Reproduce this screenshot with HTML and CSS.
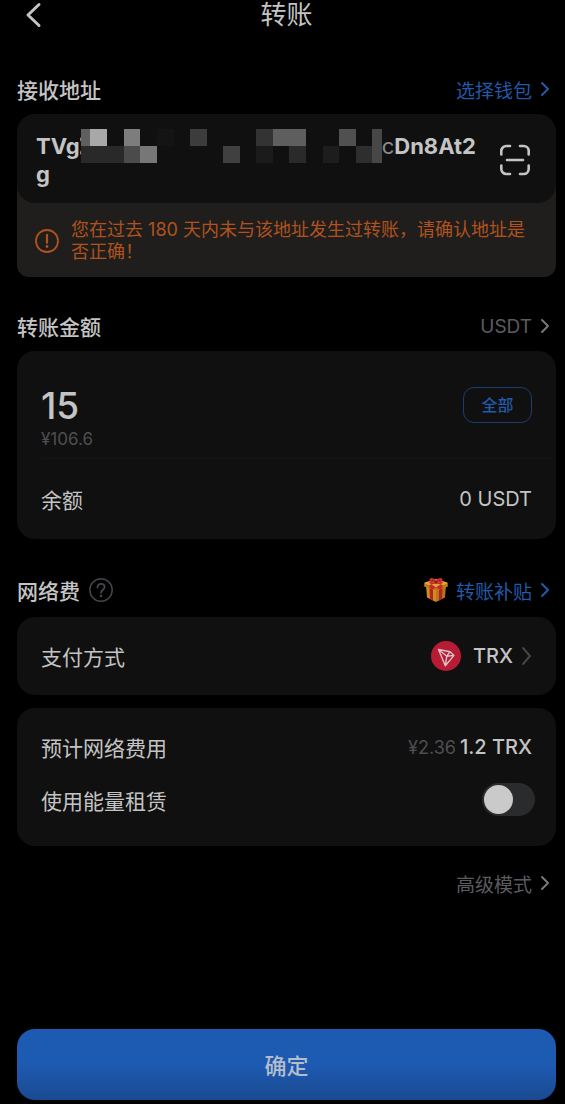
FILE: index.html
```html
<!DOCTYPE html>
<html lang="zh-CN">
<head>
<meta charset="utf-8">
<meta name="viewport" content="width=device-width, initial-scale=1">
<title>转账</title>
<link rel="stylesheet" href="styles.css">
</head>
<body>
<main class="page">
  <header class="topbar">
    <button class="back" type="button" aria-label="返回">
      <svg width="18" height="28" viewBox="0 0 18 28"><path d="M15 3.500L4 14l11 10.500" fill="none" stroke="currentColor" stroke-width="3" stroke-linecap="round" stroke-linejoin="round"/></svg>
    </button>
    <h1 class="title">转账</h1>
  </header>

  <section class="section section-address">
    <div class="head">
      <h2 class="label">接收地址</h2>
      <a class="link link-blue" href="#">选择钱包
        <svg class="chev" width="10" height="16" viewBox="0 0 10 16"><path d="M2 2l6 6-6 6"/></svg>
      </a>
    </div>
    <div class="notice-wrap">
      <div class="card address-card">
        <p class="address"><span>TVg</span><span class="masked"><svg class="mosaic" width="302" height="34" viewBox="0 0 302 34" aria-hidden="true">
          <path d="M0 9l2 3.500M0 25l2-3.500" stroke="#8c8c8c" stroke-width="2"/>
          <g transform="translate(1)" shape-rendering="crispEdges">
          <path fill="#101010" d="M0 0h302v34H0z"/>
          <path fill="#5f5f5f" d="M0 0h9v17H0z"/><path fill="#a8a8a8" d="M9 0h17v17H9z"/>
          <path fill="#7d7d7d" d="M43 0h16v17H43z"/><path fill="#141414" d="M76 0h17v17H76z"/>
          <path fill="#3c3c3c" d="M109 0h17v17h-17z"/><path fill="#333" d="M175 0h17v17h-17z"/>
          <path fill="#5e5e5e" d="M192 0h33v17h-33z"/><path fill="#505050" d="M258 0h17v17h-17z"/>
          <path fill="#474747" d="M291 0h11v34h-11z"/><path fill="#292929" d="M0 17h43v17H0z"/>
          <path fill="#4b4b4b" d="M43 17h16v17H43z"/><path fill="#777" d="M59 17h17v17H59z"/>
          <path fill="#404040" d="M142 17h17v17h-17z"/><path fill="#1b1b1b" d="M175 17h17v17h-17z"/>
          <path fill="#2a2a2a" d="M208 17h17v17h-17z"/><path fill="#1d1d1d" d="M242 17h16v17h-16z"/>
          <path fill="#2e2e2e" d="M275 17h16v17h-16z"/>
          </g>
        </svg></span><span class="thin">c</span><span>Dn8At2</span><span>g</span></p>
        <button class="scan" type="button" aria-label="扫描">
          <svg width="32" height="32" viewBox="0 0 32 32" fill="none" stroke="currentColor" stroke-width="2.600" stroke-linecap="round"><path d="M2.300 10.500V7a5 5 0 0 1 5-5H11M21 2h3.700a5 5 0 0 1 5 5v3.500M29.700 21.500V25a5 5 0 0 1-5 5H21M11 30H7.300a5 5 0 0 1-5-5v-3.500M8 16h16"/></svg>
        </button>
      </div>
      <div class="notice">
        <svg width="24" height="24" viewBox="0 0 24 24" fill="none" stroke="currentColor" stroke-width="1.800"><circle cx="12" cy="12" r="11"/><path d="M12 5.800v8" stroke-width="2.200" stroke-linecap="round"/><circle cx="12" cy="17.500" r="1.400" fill="currentColor" stroke="none"/></svg>
        <p class="notice-text">您在过去 180 天内未与该地址发生过转账，请确认地址是否正确！</p>
      </div>
    </div>
  </section>

  <section class="section">
    <div class="head">
      <label class="label" for="amount">转账金额</label>
      <a class="link link-grey" href="#">USDT
        <svg class="chev" width="10" height="16" viewBox="0 0 10 16"><path d="M2 2l6 6-6 6"/></svg>
      </a>
    </div>
    <div class="card">
      <div class="amount-block">
        <div class="amount-row">
          <input class="amount" id="amount" type="text" inputmode="decimal" value="15">
          <button class="all" type="button">全部</button>
        </div>
        <p class="fiat">¥106.6</p>
      </div>
      <div class="row balance">
        <span class="name">余额</span>
        <span>0 USDT</span>
      </div>
    </div>
  </section>

  <section class="section">
    <div class="head head-fee">
      <h2 class="label">网络费</h2>
      <button class="help" type="button" aria-label="网络费说明">
        <svg width="24" height="26" viewBox="0 0 24 26" fill="none" stroke="currentColor" stroke-width="1.500"><circle cx="12" cy="13" r="11.200"/><path d="M8.500 10.500c0-2.200 1.500-3.700 3.600-3.700s3.500 1.300 3.500 3.200c0 2.700-3.500 2.900-3.500 5.800" stroke-width="1.800" stroke-linecap="round"/><circle cx="12.100" cy="19" r="1.300" fill="currentColor" stroke="none"/></svg>
      </button>
      <a class="link link-blue" href="#">
        <svg class="gift" width="24" height="26" viewBox="0 0 24 26">
          <path fill="#cf8a22" d="M2 8l10 4v13L3 20.500z"/>
          <path fill="#b8741c" d="M22 8l-10 4v13l9-4.500z"/>
          <path fill="#b3231d" d="M5.500 9l3.500 1.500v13L6 22zM18.500 9L15 10.500v13l3-1.500z"/>
          <path fill="#e0a537" d="M.5 5.500L12 2l11.500 3.500v4L12 13.500.5 9.500z"/>
          <path fill="#bd7a1d" d="M.5 6.500L12 10.500v3L.5 9.500zM23.500 6.500L12 10.500v3l11.500-4z"/>
          <path fill="#c52b25" d="M5.500 4.500L18.500 8v3.200L15 12.400 5.500 6zM18.500 4.500L5.500 8v3.200L9 12.400 18.500 6z"/>
          <path fill="#d8322f" d="M12 5C9 6 6.500 6 5.500 4.500 5 2 6.500.5 8.500 1.200 10.500 1.500 11.500 3 12 5zM12 5c3 1 5.500 1 6.500-.5C19 2 17.500.5 15.500 1.200 13.500 1.500 12.500 3 12 5z"/>
          <path fill="#8e1717" d="M10.500 3.500h3v3h-3zM7 3.500l1.500-1 1.500 2zM17 3.500l-1.500-1-1.500 2z"/>
        </svg>转账补贴
        <svg class="chev" width="10" height="16" viewBox="0 0 10 16"><path d="M2 2l6 6-6 6"/></svg>
      </a>
    </div>
    <div class="card">
      <div class="row pay">
        <span class="name">支付方式</span>
        <a class="coin" href="#">
          <svg width="30" height="30" viewBox="0 0 30 30"><circle cx="15" cy="15" r="15" fill="#b81c34"/><path d="M7.500 8.500l11.500 2.200 4 3.700-8.700 10.300zM7.500 8.500l8.300 6.700L19 10.700M15.800 15.200l7.200-.8M15.800 15.200l-1.500 9.500" fill="none" stroke="#d8c4c7" stroke-width="1.400" stroke-linejoin="round"/></svg>
          <span class="coin-name">TRX</span>
          <svg class="chev chev-dim" width="11" height="20" viewBox="0 0 11 20"><path d="M2 2l7 8-7 8"/></svg>
        </a>
      </div>
    </div>
    <div class="card fee-card">
      <div class="row">
        <span class="name">预计网络费用</span>
        <span class="cost"><span class="cost-fiat">¥2.36</span><span class="cost-coin">1.2 TRX</span></span>
      </div>
      <div class="row row-switch">
        <label class="name" for="rent">使用能量租赁</label>
        <input class="switch" id="rent" type="checkbox" role="switch">
      </div>
    </div>
    <div class="advanced">
      <a class="link link-grey" href="#">高级模式
        <svg class="chev" width="10" height="16" viewBox="0 0 10 16"><path d="M2 2l6 6-6 6"/></svg>
      </a>
    </div>
  </section>

  <button class="confirm" type="submit">确定</button>
</main>
</body>
</html>
```
FILE: styles.css
```css
* {
  box-sizing: border-box;
}

body {
  margin: 0;
  background: #000;
  color: #c4c4c4;
  font-family: Inter, "Noto Sans CJK SC", sans-serif;
  font-size: 20px;
}

h1, h2, p {
  margin: 0;
}

button, input {
  margin: 0;
  padding: 0;
  border: 0;
  background: none;
  color: inherit;
  font: inherit;
}

a {
  color: inherit;
  text-decoration: none;
}

svg {
  display: block;
  flex: none;
}

.page {
  display: flex;
  flex-direction: column;
  min-height: 100vh;
  padding: 0 9px 4px 17px;
}

.topbar {
  display: grid;
  grid-template-columns: 1fr auto 1fr;
  align-items: center;
  height: 28px;
}

.back {
  justify-self: start;
  margin-left: 7px;
}

.title {
  font-size: 26px;
  font-weight: 400;
  line-height: 30px;
}

.section {
  margin-top: 24px;
}

.section-address {
  margin-top: 36px;
}

.head {
  display: flex;
  align-items: center;
  height: 50px;
}

.head-fee {
  height: 54px;
}

.label,
.name {
  font-size: 21px;
}

.label {
  font-weight: 500;
}

.link {
  display: flex;
  align-items: center;
  gap: 8px;
  margin-left: auto;
  padding-right: 6px;
  font-size: 19px;
}

.link-blue {
  color: #2259a8;
}

.link-grey {
  color: #5c5b62;
}

.chev {
  fill: none;
  stroke: currentColor;
  stroke-width: 2;
  stroke-linecap: round;
  stroke-linejoin: round;
}

.link-grey .chev {
  color: #77767c;
}

.chev-dim {
  color: #45454a;
}

.card {
  border-radius: 18px;
  background: #101010;
}

.notice-wrap {
  border-radius: 20px 20px 12px 12px;
  background: #1f1e1d;
}

.address-card {
  display: flex;
  align-items: center;
  justify-content: space-between;
  padding: 18px 25px 15px 19px;
}

.address {
  width: 446px;
  font-size: 22px;
  font-weight: 700;
  line-height: 28px;
  word-break: break-all;
}

.masked {
  display: inline-block;
  width: 302px;
  height: 28px;
  vertical-align: bottom;
}

.mosaic {
  margin-top: -3px;
}

.thin {
  color: #8c8c8c;
  font-weight: 400;
}

.notice {
  display: flex;
  align-items: center;
  gap: 12px;
  padding: 16px 30px 14px 18px;
  color: #b0521d;
}

.notice-text {
  font-size: 18px;
  line-height: 22px;
}

.amount-block {
  margin-left: 24px;
  padding: 32px 24px 7px 0;
  border-bottom: 1px solid #131417;
}

.amount-row {
  display: flex;
  align-items: center;
  justify-content: space-between;
  height: 44px;
}

.amount {
  flex: 1;
  min-width: 0;
  height: 44px;
  font-size: 37px;
  font-weight: 500;
}

.all {
  width: 69px;
  height: 36px;
  border: 1px solid #1c3c70;
  border-radius: 11px;
  color: #2259a8;
  font-size: 16px;
  font-weight: 500;
  line-height: 32px;
}

.fiat {
  color: #4e4e50;
  font-size: 17px;
  line-height: 24px;
}

.row {
  display: flex;
  align-items: center;
  justify-content: space-between;
  height: 53px;
  padding: 0 24px;
}

.balance {
  height: 80px;
}

.pay {
  height: 78px;
}

.help {
  margin-left: 9px;
  color: #46464a;
}

.coin {
  display: flex;
  align-items: center;
}

.coin-name {
  margin: 0 8px 0 12px;
  font-weight: 500;
}

.fee-card {
  margin-top: 13px;
  padding: 12px 0 20px;
}

.cost {
  display: flex;
  align-items: baseline;
  gap: 4px;
}

.cost-fiat {
  color: #4e4e50;
  font-size: 18px;
}

.cost-coin {
  font-weight: 500;
}

.row-switch {
  padding-right: 21px;
}

.switch {
  appearance: none;
  display: flex;
  align-items: center;
  width: 53px;
  height: 33px;
  padding: 0 2px;
  border-radius: 17px;
  background: #2a2b2d;
}

.switch::before {
  content: "";
  width: 29px;
  height: 29px;
  border-radius: 50%;
  background: #cacaca;
}

.switch:checked {
  justify-content: flex-end;
  background: #1e5ab0;
}

.advanced {
  display: flex;
  align-items: center;
  height: 74px;
}

.confirm {
  height: 71px;
  margin-top: auto;
  padding-bottom: 2px;
  border-radius: 18px;
  background: linear-gradient(#1d5ab2 50%, #1a4a90);
  color: #b4bdca;
  font-size: 22px;
  font-weight: 500;
}
```
